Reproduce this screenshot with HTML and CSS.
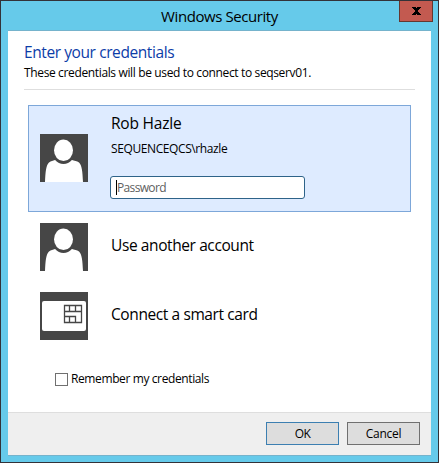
FILE: index.html
```html
<!DOCTYPE html>
<html lang="en">
<head>
<meta charset="utf-8">
<title>Windows Security</title>
<link rel="stylesheet" href="styles.css">
</head>
<body>
<div class="window">
  <header class="titlebar">
    <h1 class="title">Windows Security</h1>
    <button class="close" aria-label="Close"><svg width="9" height="8" viewBox="0 0 9 8" shape-rendering="crispEdges"><path d="M0 0h4v1h1V0h4v1H8v1H7v1H6v2h1v1h1v1h1v1H5V7H4v1H0V7h1V6h1V5h1V3H2V2H1V1H0z"/></svg></button>
  </header>
  <main class="client">
    <div class="content">
      <div class="intro">
        <h2 class="heading">Enter your credentials</h2>
        <p class="sub">These credentials will be used to connect to seqserv01.</p>
      </div>
      <div class="tile selected">
        <svg class="icon" viewBox="0 0 48 48"><path fill="#464646" d="M0 0h48v48H0z"/><path fill="#fff" d="M5 48C5.500 38 6 31 9 28.500C11 27 13 26.800 15 26H32C34 26.800 37 27 39 28.500C42 31 42.500 38 43 48z"/><ellipse cx="23.5" cy="16.500" rx="11.800" ry="13.500" fill="#464646"/><ellipse cx="23.5" cy="16.300" rx="9.500" ry="10.800" fill="#fff"/></svg>
        <div class="account">
          <div class="name rob">Rob Hazle</div>
          <div class="domain">SEQUENCEQCS\rhazle</div>
          <div class="password"><span class="caret"></span><span class="hint">Password</span></div>
        </div>
      </div>
      <div class="tile other">
        <svg class="icon" viewBox="0 0 48 48"><path fill="#464646" d="M0 0h48v48H0z"/><path fill="#fff" d="M5 48C5.500 38 6 31 9 28.500C11 27 13 26.800 15 26H32C34 26.800 37 27 39 28.500C42 31 42.500 38 43 48z"/><ellipse cx="23.5" cy="16.500" rx="11.800" ry="13.500" fill="#464646"/><ellipse cx="23.5" cy="16.300" rx="9.500" ry="10.800" fill="#fff"/></svg>
        <div class="name another">Use another account</div>
      </div>
      <div class="tile card">
        <svg class="icon" viewBox="0 0 48 48"><path fill="#464646" d="M0 0h48v48H0z"/><rect x="2" y="9" width="44" height="30" rx="2" fill="#fff"/><path fill="none" stroke="#464646" stroke-width="1.300" d="M24.500 13.500h17v17h-17zM24.500 19.500h17M24.500 24.500h11v6M29.500 13.500v6M35.500 13.500v6M29.500 24.500v6"/></svg>
        <div class="name smart">Connect a smart card</div>
      </div>
      <label class="remember"><span class="box"></span><span class="remember-text">Remember my credentials</span></label>
    </div>
    <footer class="footer">
      <button class="btn primary"><span class="ok">OK</span></button>
      <button class="btn"><span class="cancel">Cancel</span></button>
    </footer>
  </main>
</div>
</body>
</html>
```
FILE: styles.css
```css
* { box-sizing: border-box; }
body { margin: 0; font: 12px/16px "Open Sans", "Noto Sans", sans-serif; color: #000; white-space: nowrap; }
h1, h2, p { margin: 0; font-weight: 400; }
.window { width: 439px; height: 463px; padding: 0 7px 7px; border: 1px solid #333238; background: #66caea; }
.titlebar { position: relative; height: 29px; display: flex; justify-content: center; }
.title { margin-top: 5px; font-size: 15px; line-height: 20px; letter-spacing: -0.42px; }
.close { position: absolute; right: -2px; top: 0; width: 34px; height: 21px; padding: 0; border: 1px solid #65372f; border-top: 0; background: #c35a50; display: flex; align-items: center; justify-content: center; }
.client { height: 426px; border-top: 1px solid #75b3cc; border-bottom: 1px solid #75b3cc; background: #fff; }
.content { height: 381px; padding: 0 16px; }
.intro { height: 59px; padding-top: 10px; border-bottom: 1px solid #dedede; }
.heading { font-size: 15.5px; line-height: 22px; color: #0c3da8; letter-spacing: -0.41px; }
.sub { margin-top: 1px; line-height: 17px; letter-spacing: -0.36px; }
.tile { display: flex; margin: 0 4px; padding-left: 12px; }
.icon { width: 48px; height: 48px; flex: none; display: block; }
.selected { height: 107px; margin-top: 15px; padding: 28px 0 0 11px; border: 1px solid #7da7d9; background: #deebff; }
.account { margin: -22px 0 0 22px; }
.name { font-size: 15.5px; line-height: 22px; letter-spacing: -0.4px; }
.rob { margin-left: 1px; letter-spacing: -0.2px; }
.domain { margin: 7px 0 0 1px; letter-spacing: -0.4px; }
.password { display: flex; align-items: center; width: 195px; height: 23px; margin-top: 19px; padding-left: 5px; border: 1px solid #2e6389; border-radius: 3px; background: #fff; }
.caret { width: 1px; height: 15px; background: #000; }
.hint { color: #606060; letter-spacing: -0.65px; }
.other { margin-top: 11px; }
.card { margin-top: 21px; }
.another, .smart { margin: 11px 0 0 23px; }
.remember { display: flex; align-items: center; height: 16px; margin: 31px 0 0 31px; }
.box { width: 13px; height: 13px; border: 1px solid #707070; background: #fff; }
.remember-text { margin-left: 3px; letter-spacing: -0.39px; }
.footer { display: flex; justify-content: flex-end; gap: 8px; height: 43px; padding: 9px 11px 0 0; border-top: 1px solid #dedede; background: #efefef; }
.btn { width: 73px; height: 23px; padding: 0; border: 1px solid #707070; background: #ddd; color: #000; font: inherit; }
.primary { border-color: #3c7fb1; }
.cancel { letter-spacing: -0.3px; }
.ok { letter-spacing: -0.6px; }
```
